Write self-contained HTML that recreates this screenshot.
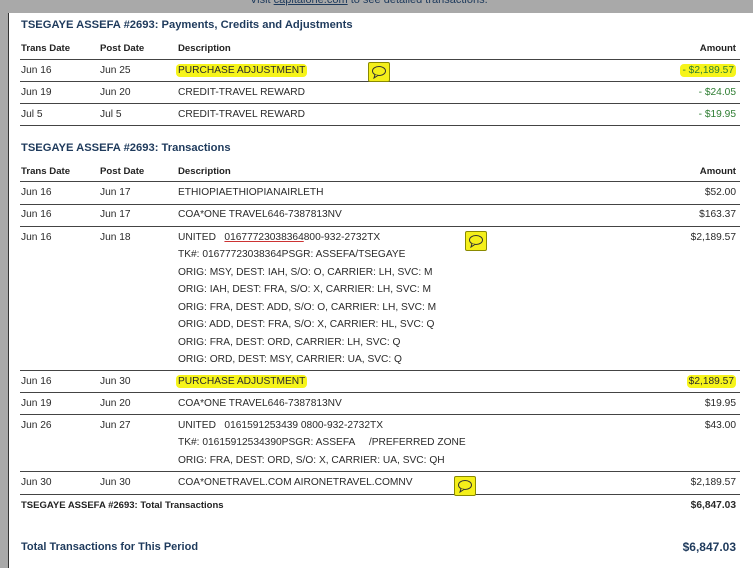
<!DOCTYPE html>
<html><head><style>
body{margin:0;width:753px;height:568px;background:#fff;position:relative;overflow:hidden;font-family:"Liberation Sans",sans-serif;color:#2a2a2a;font-size:10.2px}
.a{position:absolute;white-space:nowrap;line-height:12px}
.r{position:absolute;right:17px;white-space:nowrap;line-height:12px}
.hl{position:absolute;height:1px;background:#444;left:20px;right:13px}
.h{font-weight:bold;color:#1e3a5c;font-size:11.2px}
.th{font-weight:bold;font-size:9.6px;color:#222}
.y{background:#f6f41a;border-radius:4px;padding:1px 2px;margin-left:-2px}
.g{color:#2e7d32}
.b{position:absolute;width:20px;height:18px;background:#f4ef1a;border:1px solid #8a8a00;border-radius:2px}
.b svg{position:absolute;left:2px;top:2px}
</style></head><body>
<div style="position:absolute;left:0;top:0;width:753px;height:13px;background:#a9a9a9"></div>
<div class="a" style="left:250px;top:-6px;color:#1e3a5c;font-size:11px">Visit <u>capitalone.com</u> to see detailed transactions.</div>
<div style="position:absolute;left:0;top:0;width:9px;height:568px;background:#a9a9a9"></div>
<div style="position:absolute;left:8px;top:13px;width:1px;height:555px;background:#333"></div>

<div class="a h" style="left:21px;top:19px">TSEGAYE ASSEFA #2693: Payments, Credits and Adjustments</div>
<div class="a th" style="left:21px;top:43px">Trans Date</div><div class="a th" style="left:100px;top:43px">Post Date</div><div class="a th" style="left:178px;top:43px">Description</div><div class="r th" style="top:43px">Amount</div>
<div class="hl" style="top:59px"></div>
<div class="a" style="left:21px;top:65px">Jun 16</div><div class="a" style="left:100px;top:65px">Jun 25</div><div class="a" style="left:178px;top:65px"><span class="y">PURCHASE ADJUSTMENT</span></div><div class="r g" style="top:65px"><span class="y">- $2,189.57</span></div>
<div class="hl" style="top:81px"></div>
<div class="a" style="left:21px;top:87px">Jun 19</div><div class="a" style="left:100px;top:87px">Jun 20</div><div class="a" style="left:178px;top:87px">CREDIT-TRAVEL REWARD</div><div class="r g" style="top:87px">- $24.05</div>
<div class="hl" style="top:103px"></div>
<div class="a" style="left:21px;top:109px">Jul 5</div><div class="a" style="left:100px;top:109px">Jul 5</div><div class="a" style="left:178px;top:109px">CREDIT-TRAVEL REWARD</div><div class="r g" style="top:109px">- $19.95</div>
<div class="hl" style="top:125px"></div>

<div class="a h" style="left:21px;top:142px">TSEGAYE ASSEFA #2693: Transactions</div>
<div class="a th" style="left:21px;top:166px">Trans Date</div><div class="a th" style="left:100px;top:166px">Post Date</div><div class="a th" style="left:178px;top:166px">Description</div><div class="r th" style="top:166px">Amount</div>
<div class="hl" style="top:181px"></div>
<div class="a" style="left:21px;top:187px">Jun 16</div><div class="a" style="left:100px;top:187px">Jun 17</div><div class="a" style="left:178px;top:187px">ETHIOPIAETHIOPIANAIRLETH</div><div class="r" style="top:187px">$52.00</div>
<div class="hl" style="top:204px"></div>
<div class="a" style="left:21px;top:209px">Jun 16</div><div class="a" style="left:100px;top:209px">Jun 17</div><div class="a" style="left:178px;top:209px">COA*ONE TRAVEL646-7387813NV</div><div class="r" style="top:209px">$163.37</div>
<div class="hl" style="top:226px"></div>
<div class="a" style="left:21px;top:232px">Jun 16</div><div class="a" style="left:100px;top:232px">Jun 18</div><div class="r" style="top:232px">$2,189.57</div>
<div class="a" style="left:178px;top:232px">UNITED &nbsp; <span style="text-decoration:underline;text-decoration-color:#c33">01677723038364</span>800-932-2732TX</div>
<div class="a" style="left:178px;top:249px">TK#: 01677723038364PSGR: ASSEFA/TSEGAYE</div>
<div class="a" style="left:178px;top:267px">ORIG: MSY, DEST: IAH, S/O: O, CARRIER: LH, SVC: M</div>
<div class="a" style="left:178px;top:284px">ORIG: IAH, DEST: FRA, S/O: X, CARRIER: LH, SVC: M</div>
<div class="a" style="left:178px;top:302px">ORIG: FRA, DEST: ADD, S/O: O, CARRIER: LH, SVC: M</div>
<div class="a" style="left:178px;top:319px">ORIG: ADD, DEST: FRA, S/O: X, CARRIER: HL, SVC: Q</div>
<div class="a" style="left:178px;top:337px">ORIG: FRA, DEST: ORD, CARRIER: LH, SVC: Q</div>
<div class="a" style="left:178px;top:354px">ORIG: ORD, DEST: MSY, CARRIER: UA, SVC: Q</div>
<div class="hl" style="top:370px"></div>
<div class="a" style="left:21px;top:376px">Jun 16</div><div class="a" style="left:100px;top:376px">Jun 30</div><div class="a" style="left:178px;top:376px"><span class="y">PURCHASE ADJUSTMENT</span></div><div class="r" style="top:376px"><span class="y">$2,189.57</span></div>
<div class="hl" style="top:392px"></div>
<div class="a" style="left:21px;top:398px">Jun 19</div><div class="a" style="left:100px;top:398px">Jun 20</div><div class="a" style="left:178px;top:398px">COA*ONE TRAVEL646-7387813NV</div><div class="r" style="top:398px">$19.95</div>
<div class="hl" style="top:414px"></div>
<div class="a" style="left:21px;top:420px">Jun 26</div><div class="a" style="left:100px;top:420px">Jun 27</div><div class="a" style="left:178px;top:420px">UNITED &nbsp; 0161591253439 0800-932-2732TX</div><div class="r" style="top:420px">$43.00</div>
<div class="a" style="left:178px;top:437px">TK#: 01615912534390PSGR: ASSEFA &nbsp;&nbsp;&nbsp;&nbsp;/PREFERRED ZONE</div>
<div class="a" style="left:178px;top:455px">ORIG: FRA, DEST: ORD, S/O: X, CARRIER: UA, SVC: QH</div>
<div class="hl" style="top:471px"></div>
<div class="a" style="left:21px;top:477px">Jun 30</div><div class="a" style="left:100px;top:477px">Jun 30</div><div class="a" style="left:178px;top:477px">COA*ONETRAVEL.COM AIRONETRAVEL.COMNV</div><div class="r" style="top:477px">$2,189.57</div>
<div class="hl" style="top:494px"></div>
<div class="a" style="left:21px;top:500px;font-weight:bold;font-size:9.5px;color:#222">TSEGAYE ASSEFA #2693: Total Transactions</div><div class="r" style="top:500px;font-weight:bold">$6,847.03</div>
<div class="a" style="left:21px;top:541px;font-weight:bold;color:#1e3a5c;font-size:11px">Total Transactions for This Period</div><div class="r" style="top:541px;font-weight:bold;font-size:12px;color:#1e3a5c">$6,847.03</div>

<div class="b" style="left:368px;top:62px"><svg width="16" height="14" viewBox="0 0 16 14"><ellipse cx="8" cy="6" rx="6.5" ry="4.5" fill="#f4ef1a" stroke="#333" stroke-width="1"/><path d="M4 9.5 L3 13 L7 10.3" fill="#f4ef1a" stroke="#333" stroke-width="1"/></svg></div>
<div class="b" style="left:465px;top:231px"><svg width="16" height="14" viewBox="0 0 16 14"><ellipse cx="8" cy="6" rx="6.5" ry="4.5" fill="#f4ef1a" stroke="#333" stroke-width="1"/><path d="M4 9.5 L3 13 L7 10.3" fill="#f4ef1a" stroke="#333" stroke-width="1"/></svg></div>
<div class="b" style="left:454px;top:476px"><svg width="16" height="14" viewBox="0 0 16 14"><ellipse cx="8" cy="6" rx="6.5" ry="4.5" fill="#f4ef1a" stroke="#333" stroke-width="1"/><path d="M4 9.5 L3 13 L7 10.3" fill="#f4ef1a" stroke="#333" stroke-width="1"/></svg></div>
</body></html>
